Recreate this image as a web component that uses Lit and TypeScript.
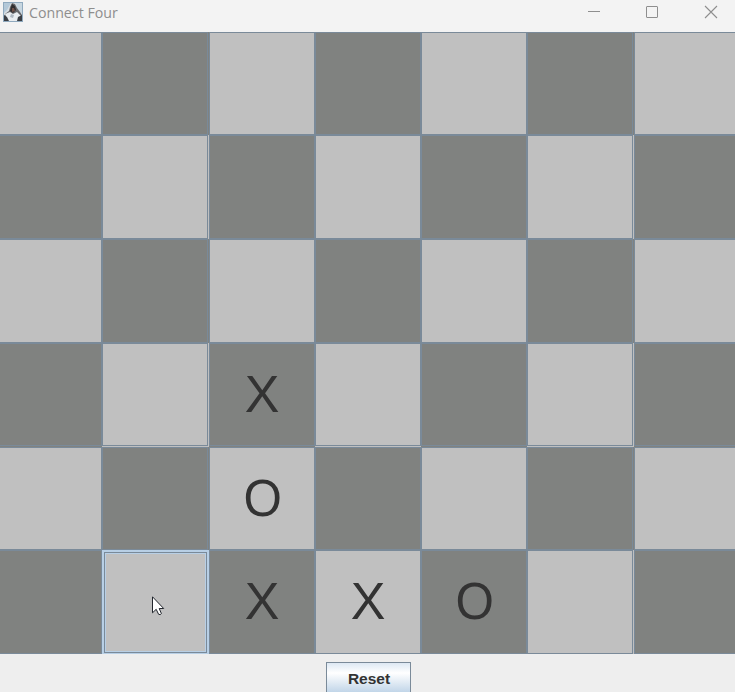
import { LitElement, html, css } from "lit";
import { customElement, state } from "lit/decorators.js";
import { classMap } from "lit/directives/class-map.js";

const ROWS = 6;
const COLS = 7;

@customElement("board-cell")
class BoardCell extends LitElement {
  static properties = { mark: {}, dark: { type: Boolean }, active: { type: Boolean }, wide: { type: Boolean }, tall: { type: Boolean } };
  declare mark: string;
  declare dark: boolean;
  declare active: boolean;
  declare wide: boolean;
  declare tall: boolean;
  static styles = css`
    :host { display: block; min-width: 0; min-height: 0; }
    .cell { box-sizing: border-box; width: 100%; height: 100%; display: flex; background: #c0c0c0; }
    .dark { background: #808280; }
    .wide { padding-right: 1px; }
    .tall { padding-bottom: 1px; }
    .face { flex: 1; box-sizing: border-box; border: 1px solid #7a8a99; padding-bottom: 2px; display: flex; align-items: center; justify-content: center; font: 52px/1 "Liberation Sans", sans-serif; color: #333; }
    .mark { display: block; }
    .round { transform: translateX(0.5px) scaleX(0.95); }
    .active { padding: 0; }
    .active .face { border: solid #b8cfe5; border-width: 2px 2px 1px; box-shadow: inset 0 0 0 1px #7a8a99, inset 0 0 0 2px #b8cfe5; }
  `;
  render() {
    return html`<div class=${classMap({ cell: true, dark: this.dark, wide: this.wide, tall: this.tall, active: this.active })}>
      <div class="face"><span class=${classMap({ mark: true, round: this.mark === "O" })}>${this.mark}</span></div>
    </div>`;
  }
}

@customElement("app-root")
class AppRoot extends LitElement {
  @state() marks: Record<string, string> = { "3,2": "X", "4,2": "O", "5,2": "X", "5,3": "X", "5,4": "O" };
  static styles = css`
    :host { display: flex; flex-direction: column; height: 692px; width: 735px; overflow: hidden; position: relative; background: #eee; }
    .title { flex: none; height: 32px; background: #f3f3f3; display: flex; box-sizing: border-box; padding-left: 3px; color: #8e8e8e; }
    .icon { width: 20px; height: 20px; margin-top: 2px; }
    .name { flex: 1; margin-left: 6px; font: 14.2px/26px "Open Sans", "Noto Sans", sans-serif; white-space: nowrap; }
    .controls { display: flex; gap: 45px; padding: 5px 17px 0 0; }
    .controls svg { width: 14px; height: 14px; }
    .board { flex: none; margin-left: -1px; display: grid; grid-template-columns: 103px 107px 106px 106px 106px 107px 106px; grid-template-rows: 103px 104px 104px 104px 103px 104px; }
    .footer { flex: 1; display: flex; justify-content: center; padding: 8px 0 0 2px; }
    .reset { flex: none; box-sizing: border-box; width: 85px; height: 34px; margin: 0; padding: 0 0 0 1px; border: 1px solid #7a8a99; border-radius: 0; background: linear-gradient(#dde8f3 0, #fff 10px, #b8cfe5 32px); font: bold 15.5px/32px "Liberation Sans", sans-serif; color: #333; }
    .pointer { position: absolute; left: 152px; top: 596px; width: 13px; height: 20px; }
  `;
  render() {
    const cells = Array.from({ length: ROWS * COLS }, (_, i) => [Math.floor(i / COLS), i % COLS]);
    return html`
      <div class="title">
        <svg class="icon" viewBox="0 0 20 20">
          <rect x=".5" y=".5" width="19" height="19" fill="#d6dde3" stroke="#8fa9be" />
          <path d="M1 1h7L4 8 1 11z" fill="#b3c8d8" />
          <path d="M13 1h6v11l-5-5z" fill="#c7d6e0" />
          <path d="M9 1l3 1 2 4 3 4 2 3v3l-5-2-4-2-4 2-5 2 1-4 4-3 1-4z" fill="#66676a" />
          <path d="M9 2l3 2 1 4-3 3-3-2 1-4z" fill="#302e30" />
          <path d="M9 6l2 0 1 3-3 1z" fill="#72534a" />
          <path d="M2 12l5-2 3 2 4-2 4 4-2 5H5z" fill="#e9edf0" />
          <path d="M1 13l3 2 2 4H1zM15 15l4-2v6h-5z" fill="#3b3f45" />
          <path d="M8 12l3 1-1 3-3-1z" fill="#aeb8c1" />
        </svg>
        <div class="name">Connect Four</div>
        <div class="controls">
          <svg viewBox="0 0 14 14"><path d="M2 6.5h12" stroke="#8e8e8e" /></svg>
          <svg viewBox="0 0 14 14"><rect x="1.5" y="1.5" width="11" height="11" rx=".5" fill="none" stroke="#8e8e8e" /></svg>
          <svg viewBox="0 0 14 14"><path d="M1 1l12 12M13 1L1 13" stroke="#8e8e8e" stroke-width="1.1" /></svg>
        </div>
      </div>
      <div class="board">
        ${cells.map(([r, c]) => html`<board-cell
          .mark=${this.marks[`${r},${c}`] ?? ""}
          .dark=${(r + c) % 2 === 1}
          .active=${r === 5 && c === 1}
          .wide=${c === 1 || c === 5}
          .tall=${r === 3}></board-cell>`)}
      </div>
      <div class="footer"><button class="reset">Reset</button></div>
      <svg class="pointer" viewBox="0 0 13 20">
        <path d="M.5.8v16l3.7-3.5 2.4 5q1.7 1 2.8-.7L7.2 12.5h4.5z" fill="#fff" stroke="#22262d" stroke-width="1" />
      </svg>
    `;
  }
}
